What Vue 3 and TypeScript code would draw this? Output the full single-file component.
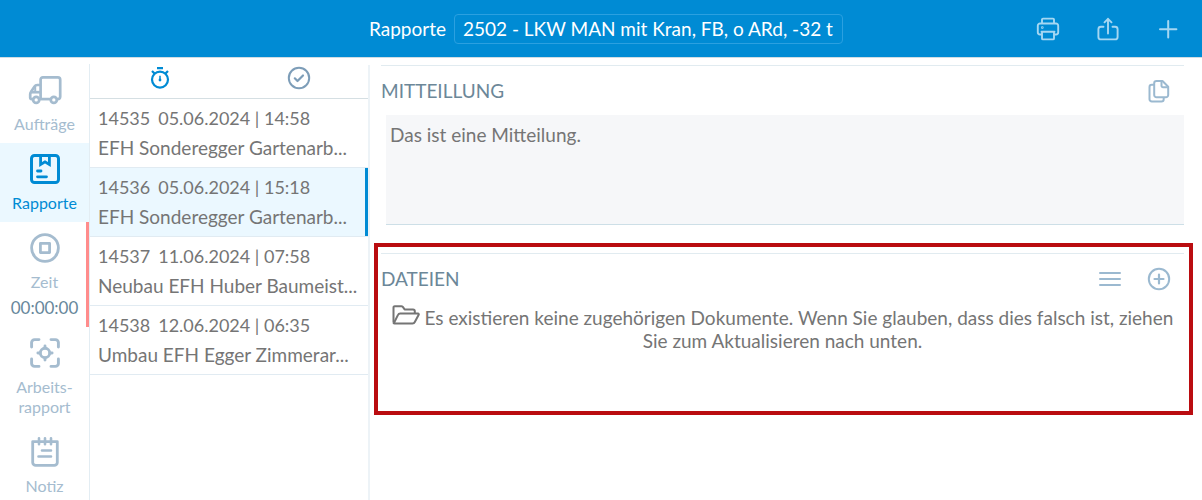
<script setup lang="ts">
import { ref } from 'vue'

interface Report {
  id: number
  date: string
  time: string
  title: string
}

const vehicles: string[] = ['2502 - LKW MAN mit Kran, FB, o ARd, -32 t']
const vehicle = ref(vehicles[0])

const reports: Report[] = [
  { id: 14535, date: '05.06.2024', time: '14:58', title: 'EFH Sonderegger Gartenarb...' },
  { id: 14536, date: '05.06.2024', time: '15:18', title: 'EFH Sonderegger Gartenarb...' },
  { id: 14537, date: '11.06.2024', time: '07:58', title: 'Neubau EFH Huber Baumeist...' },
  { id: 14538, date: '12.06.2024', time: '06:35', title: 'Umbau EFH Egger Zimmerar...' },
]
const selectedId = ref(14536)
const message = ref('Das ist eine Mitteilung.')
</script>

<template>
  <div class="app">
    <header class="topbar">
      <div class="topbar-side"></div>
      <div class="topbar-title">
        <label for="vehicle">Rapporte</label>
        <select id="vehicle" v-model="vehicle" class="vehicle">
          <option v-for="v in vehicles" :key="v" :value="v">{{ v }}</option>
        </select>
      </div>
      <div class="topbar-side topbar-actions">
        <button type="button" class="icon-button" aria-label="Drucken">
          <svg width="24" height="24" viewBox="0 0 24 24" fill="none" stroke="currentColor" stroke-width="1.9" stroke-linejoin="round" stroke-linecap="round">
            <path d="M6 6V2.600a1 1 0 0 1 1-1h10a1 1 0 0 1 1 1V6" />
            <path d="M5.500 17.500H4a2.200 2.200 0 0 1-2.200-2.200V8.700A2.200 2.200 0 0 1 4 6.500h16a2.200 2.200 0 0 1 2.200 2.200v6.600a2.200 2.200 0 0 1-2.200 2.200H18.500" />
            <path d="M5.500 14.800H18.500M6 14.800V21.400a1 1 0 0 0 1 1h10a1 1 0 0 0 1-1V14.800" />
            <circle cx="6.300" cy="10.600" r="0.400" fill="currentColor" />
          </svg>
        </button>
        <button type="button" class="icon-button" aria-label="Teilen">
          <svg width="24" height="24" viewBox="0 0 24 24" fill="none" stroke="currentColor" stroke-width="1.9" stroke-linejoin="round" stroke-linecap="round">
            <path d="M12 16.500V1.800M8.500 5.300l3.500-3.500 3.500 3.500" />
            <path d="M7.500 9.800H4.900a2.500 2.500 0 0 0-2.500 2.500v7.600a2.500 2.500 0 0 0 2.500 2.500h14.200a2.500 2.500 0 0 0 2.500-2.500v-7.600a2.500 2.500 0 0 0-2.500-2.500H16.500" />
          </svg>
        </button>
        <button type="button" class="icon-button" aria-label="Hinzufügen">
          <svg width="24" height="24" viewBox="0 0 24 24" fill="none" stroke="currentColor" stroke-width="2" stroke-linecap="round">
            <path d="M12.200 4V20.400M4 12.200H20.400" />
          </svg>
        </button>
      </div>
    </header>

    <div class="body">
      <nav class="sidebar">
        <a href="#auftraege" class="nav-item">
          <svg width="34" height="30" viewBox="0 0 34 30" fill="none" stroke="currentColor" stroke-width="2.700" stroke-linejoin="round">
            <path d="M12.600 24V4.700a2.300 2.300 0 0 1 2.300-2.300h15a2.300 2.300 0 0 1 2.300 2.300v17.100a2.300 2.300 0 0 1-2.300 2.300H29" />
            <path d="M11.400 24.100h11.400" />
            <path d="M12.600 10H9.200a3 3 0 0 0-2.600 1.400L2.900 17.100a4 4 0 0 0-.7 2.200v3.500a1.300 1.300 0 0 0 1.300 1.300h1.500" />
            <path d="M3 17.200H12.600" />
            <path d="M7.200 11V17" stroke-width="2" />
            <circle cx="8.200" cy="24.900" r="3" />
            <circle cx="25.800" cy="24.900" r="3" />
          </svg>
          <span>Aufträge</span>
        </a>
        <a href="#rapporte" class="nav-item active" aria-current="page">
          <svg width="30" height="30" viewBox="0 0 30 30" fill="none" stroke="currentColor" stroke-width="3" stroke-linejoin="round" stroke-linecap="round">
            <rect x="1.500" y="1.500" width="27" height="27" rx="3" />
            <path d="M10.600 2v8.500l4.400-2.600 4.400 2.600V2" stroke-width="2.800" stroke-linejoin="miter" />
            <path d="M7.500 17h3.500M7.500 22.800h9" stroke-width="2.800" />
          </svg>
          <span>Rapporte</span>
        </a>
        <a href="#zeit" class="nav-item running">
          <svg width="30" height="30" viewBox="0 0 30 30" fill="none" stroke="currentColor" stroke-width="2.800" stroke-linejoin="round">
            <circle cx="15" cy="15" r="13.400" />
            <rect x="10.400" y="10.400" width="9.200" height="9.200" />
          </svg>
          <span>Zeit</span>
          <span class="timer">00:00:00</span>
        </a>
        <a href="#arbeitsrapport" class="nav-item">
          <svg width="30" height="30" viewBox="0 0 30 30" fill="none" stroke="currentColor" stroke-width="2.900" stroke-linecap="round">
            <path d="M1.600 9V4.600a3 3 0 0 1 3-3H9M21 1.600h4.400a3 3 0 0 1 3 3V9M28.400 21v4.400a3 3 0 0 1-3 3H21M9 28.400H4.600a3 3 0 0 1-3-3V21" />
            <circle cx="15" cy="15" r="4.700" />
            <path d="M15 7.900v2.100M15 20v2.100M7.900 15H10M20 15h2.100" />
          </svg>
          <span>Arbeits-<br>rapport</span>
        </a>
        <a href="#notiz" class="nav-item">
          <svg width="30" height="30" viewBox="0 0 30 30" fill="none" stroke="currentColor" stroke-width="2.800" stroke-linecap="round" stroke-linejoin="round">
            <path d="M2.700 4.600H27.300V25.400a3 3 0 0 1-3 3H5.700a3 3 0 0 1-3-3Z" />
            <path d="M9 1.300v6M15 1.300v6M21 1.300v6" stroke-width="2.600" />
            <path d="M12 13.500h9M8.500 19.500h12.500" stroke-width="2.600" />
          </svg>
          <span>Notiz</span>
        </a>
      </nav>

      <section class="list" aria-label="Rapporte">
        <div class="tabs">
          <button type="button" class="tab current" aria-label="Offen">
            <svg width="22" height="24" viewBox="0 0 22 24" fill="none" stroke="currentColor" stroke-width="2.200">
              <circle cx="11" cy="13.600" r="8" />
              <path d="M8 2.200h6M3 5l2.400 2.400M19 5l-2.400 2.400" />
              <path d="M11 9.800v4" stroke-width="1.500" />
              <circle cx="11" cy="14" r="1.400" fill="currentColor" stroke="none" />
            </svg>
          </button>
          <button type="button" class="tab" aria-label="Erledigt">
            <svg width="24" height="24" viewBox="0 0 24 24" fill="none" stroke="currentColor" stroke-width="2" stroke-linecap="round" stroke-linejoin="round">
              <circle cx="12" cy="12" r="10.200" />
              <path d="M7.800 12.300l2.700 2.700 5.500-5.500" stroke-width="2.200" />
            </svg>
          </button>
        </div>
        <ul class="reports">
          <li v-for="r in reports" :key="r.id">
            <button type="button" class="report" :class="{ selected: r.id === selectedId }" @click="selectedId = r.id">
              <span class="report-line meta"><span class="report-id">{{ r.id }}</span>{{ r.date }} | {{ r.time }}</span>
              <span class="report-line">{{ r.title }}</span>
            </button>
          </li>
        </ul>
      </section>

      <main class="detail">
        <section class="message">
          <div class="section-head">
            <h2><label for="message">MITTEILLUNG</label></h2>
            <button type="button" class="icon-button" aria-label="Kopieren">
              <svg width="24" height="24" viewBox="0 0 24 24" fill="none" stroke="currentColor" stroke-width="2" stroke-linejoin="round">
                <path d="M9.500 2h6L21.200 7.700V16a2.300 2.300 0 0 1-2.300 2.300H9.500A2.300 2.300 0 0 1 7.200 16V4.300A2.300 2.300 0 0 1 9.500 2Z" />
                <path d="M14.500 2.500v4.300a1.500 1.500 0 0 0 1.500 1.500h4.800" />
                <path d="M7.200 5.800H4.800A2.300 2.300 0 0 0 2.500 8.100V20.200a2.300 2.300 0 0 0 2.300 2.300h9.600a2.300 2.300 0 0 0 2.300-2.300V18.500" />
              </svg>
            </button>
          </div>
          <textarea id="message" v-model="message" class="message-text"></textarea>
        </section>

        <section class="files">
          <div class="section-head">
            <h2>DATEIEN</h2>
            <button type="button" class="icon-button" aria-label="Liste">
              <svg width="24" height="24" viewBox="0 0 24 24" fill="none" stroke="currentColor" stroke-width="2" stroke-linecap="round">
                <path d="M2 6h20M2 12h20M2 18h20" />
              </svg>
            </button>
            <button type="button" class="icon-button" aria-label="Datei hinzufügen">
              <svg width="24" height="24" viewBox="0 0 24 24" fill="none" stroke="currentColor" stroke-width="2" stroke-linecap="round">
                <circle cx="12" cy="12" r="10.200" />
                <path d="M12 7.500v9M7.500 12h9" stroke-width="2.200" />
              </svg>
            </button>
          </div>
          <p class="empty">
            <svg class="folder" width="28" height="20" viewBox="0 0 28 20" fill="none" stroke="currentColor" stroke-width="2" stroke-linejoin="round">
              <path d="M1.500 17.500V2.500a1.300 1.300 0 0 1 1.300-1.300h6.500a2 2 0 0 1 1.500.7L12.600 4.400h8.400a1.800 1.800 0 0 1 1.800 1.800v2.200" />
              <path d="M1.800 18.300L6 9.900a2.400 2.400 0 0 1 2.200-1.400H26a.8.8 0 0 1 .7 1.200l-3.900 7.300a2.600 2.600 0 0 1-2.300 1.500H2.300a.8.8 0 0 1-.8-.8" />
            </svg>
            Es existieren keine zugehörigen Dokumente. Wenn Sie glauben, dass dies falsch ist, ziehen Sie zum Aktualisieren nach unten.
          </p>
        </section>
      </main>
    </div>
  </div>
</template>

<style>
body {
  margin: 0;
  background: #fff;
}
</style>

<style scoped>
.app {
  display: flex;
  flex-direction: column;
  min-height: 100vh;
  font-family: Lato, "Liberation Sans", sans-serif;
  font-size: 19px;
  color: #757575;
}

button,
select,
textarea {
  font: inherit;
  color: inherit;
}

button {
  margin: 0;
  padding: 0;
  border: 0;
  background: none;
  cursor: pointer;
}

svg {
  display: block;
  flex: none;
}

.topbar {
  display: flex;
  align-items: center;
  height: 57px;
  background: #008bd4;
  border-bottom: 1px solid #cfdde4;
  color: #fff;
}

.topbar-side {
  flex: 1;
}

.topbar-title {
  display: flex;
  align-items: center;
  gap: 8px;
  padding-left: 8px;
}

.vehicle {
  appearance: none;
  height: 30px;
  padding: 0 8px;
  border: 1px solid #2ba0e0;
  border-radius: 4px;
  background: transparent;
}

.topbar-actions {
  display: flex;
  justify-content: flex-end;
  gap: 36px;
  padding-right: 22px;
  color: #a5d7f2;
}

.topbar-side:first-child {
  padding-left: 24px;
}

.topbar-actions .icon-button {
  color: inherit;
}

.body {
  display: flex;
  flex: 1;
}

.sidebar {
  display: flex;
  flex-direction: column;
  flex: none;
  width: 89px;
  margin-top: 6px;
  border-right: 1px solid #e3edf3;
}

.nav-item {
  display: flex;
  flex-direction: column;
  align-items: center;
  padding: 11px 0 9px;
  color: #a5bccf;
  font-size: 16px;
  line-height: 20px;
  text-align: center;
  text-decoration: none;
}

.nav-item svg {
  margin-bottom: 9px;
}

.nav-item.active {
  background: #ebf8ff;
  color: #008bd4;
}

.nav-item.running {
  padding-left: 3px;
  border-right: 3px solid #ff8c8c;
}

.timer {
  margin-top: 6px;
  font-size: 17px;
  color: #67879b;
}

.list {
  flex: none;
  width: 278px;
  margin-top: 7px;
  border-right: 2px solid #edf3f7;
}

.tabs {
  display: flex;
  height: 33px;
  border-bottom: 1px solid #d5dfe3;
}

.tab {
  display: flex;
  flex: 1;
  align-items: center;
  justify-content: center;
  padding-bottom: 8px;
  color: #7d9db8;
}

.tab.current {
  color: #008bd4;
}

.reports {
  margin: 0;
  padding: 0;
  list-style: none;
}

.report {
  display: block;
  width: 100%;
  padding: 5px 5px 5px 8px;
  border-bottom: 1px solid #e1ebf2;
  text-align: left;
}

.report.selected {
  background: linear-gradient(#008bd4, #008bd4) right / 3px 100% no-repeat #ebf8ff;
}

.report-line {
  display: block;
  overflow: hidden;
  line-height: 29px;
  white-space: nowrap;
  text-overflow: ellipsis;
}

.meta {
  font-size: 18px;
}

.report-id {
  margin-right: 8px;
}

.detail {
  flex: 1;
  min-width: 0;
  padding-top: 7px;
}

.message {
  margin: 0 18px 0 11px;
}

.section-head {
  display: flex;
  align-items: center;
  gap: 25px;
  height: 49px;
  padding-right: 13px;
  border-top: 1px solid #e1ebf0;
}

.section-head h2 {
  flex: 1;
  margin: 0;
  font-size: 19px;
  font-weight: 400;
  color: #6c8798;
}

.icon-button {
  color: #9bb9d0;
}

.message-text {
  display: block;
  box-sizing: border-box;
  width: calc(100% - 5px);
  height: 110px;
  margin-left: 5px;
  padding: 8px 4px;
  border: 0;
  border-bottom: 1px solid #cddfe7;
  outline: 0;
  background: #f6f7f9;
  line-height: 24px;
  resize: none;
}

.files {
  min-height: 158px;
  margin: 18px 9px 0 4px;
  padding: 6px 5px 0 3px;
  border: 4px solid #ba0c10;
}

.empty {
  margin: 2px 8px 0;
  line-height: 23px;
  text-align: center;
}

.folder {
  display: inline-block;
}
</style>
